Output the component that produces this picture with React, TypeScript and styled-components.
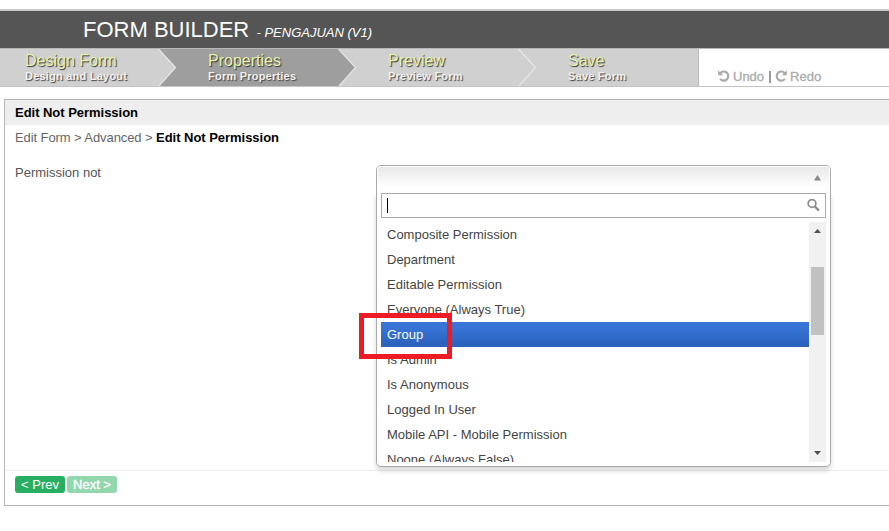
import React from "react";
import styled, { createGlobalStyle, css } from "styled-components";

const GlobalStyle = createGlobalStyle`
  * { box-sizing: border-box; }
  html, body { margin: 0; background: #fff; overflow: hidden; }
  body { font: 13px/15px "Liberation Sans", Arial, sans-serif; color: #555; }
`;

const Page = styled.div`
  height: 531px;
  padding-top: 9px;
  display: flex;
  flex-direction: column;
  overflow: hidden;
`;

const TitleBar = styled.header`
  height: 40px;
  flex: none;
  padding: 7px 0 0 83px;
  border-top: 2px solid #c6caca;
  border-bottom: 1px solid #b8b8b8;
  background: #555;
  color: #fff;
  white-space: pre;
`;

const Title = styled.span`
  font-size: 22px;
  line-height: 24px;
`;

const Subtitle = styled.em`
  font-size: 13px;
  line-height: 24px;
`;

const StepNav = styled.nav`
  height: 38px;
  flex: none;
  display: flex;
  border-bottom: 1px solid #c4c4c4;
`;

const Step = styled.div<{ $first?: boolean; $active?: boolean; $last?: boolean }>`
  position: relative;
  width: ${(p) => (p.$first ? 158 : p.$last ? 181 : 180)}px;
  padding: 3px 0 0 ${(p) => (p.$first ? 25 : 50)}px;
  background: ${(p) => (p.$active ? "#9e9e9e" : "#d0d0d0")};
  border-right: ${(p) => (p.$last ? "1px solid #bbb" : "0")};
  white-space: nowrap;
`;

const StepTitle = styled.div`
  font-size: 16px;
  line-height: 18px;
  color: #e4f2ae;
  text-shadow: 1px 1px 1px #333;
`;

const StepNote = styled.div`
  font-size: 11px;
  line-height: 13px;
  font-weight: bold;
  letter-spacing: 0.22px;
  color: #f2f2f2;
  text-shadow: 1px 1px 1px #444;
`;

const Arrow = styled.svg`
  position: absolute;
  left: 0;
  top: 0;
`;

const History = styled.div`
  display: flex;
  align-items: center;
  height: 15px;
  margin: 20px 0 0 19px;
  color: #aaa;
  -webkit-text-stroke: 0.3px #aaa;
`;

const HistoryIcon = styled.svg<{ $flip?: boolean }>`
  margin-right: 3px;
  margin-bottom: 1px;
  transform: ${(p) => (p.$flip ? "scaleX(-1)" : "none")};
`;

const Divider = styled.span`
  width: 2px;
  height: 12px;
  margin: 1px 4px 0 5px;
  background: #999;
`;

const Panel = styled.main`
  height: 407px;
  flex: none;
  margin: 12px 0 0 4px;
  border: 1px solid #b5b5b5;
  border-right: 0;
  display: flex;
  flex-direction: column;
`;

const PanelHeader = styled.h1`
  height: 25px;
  margin: 0;
  padding-left: 10px;
  background: #eee;
  color: #000;
  font-size: 13px;
  line-height: 25px;
  letter-spacing: -0.03px;
`;

const Crumbs = styled.div`
  height: 25px;
  padding-left: 10px;
  line-height: 25px;
  letter-spacing: -0.09px;
  color: #666;

  b {
    color: #000;
    letter-spacing: -0.03px;
  }
`;

const Field = styled.div`
  flex: 1;
  min-height: 0;
  display: grid;
  grid-template-columns: 361px 455px;
  padding: 15px 0 0 10px;
`;

const Label = styled.label`
  line-height: 15px;
`;

const Select = styled.div`
  position: relative;
  z-index: 1;
  height: 302px;
  border: 1px solid #aaa;
  border-radius: 5px;
  background: #fff;

  &::before {
    content: "";
    position: absolute;
    z-index: -1;
    inset: 26px -1px -1px;
    border-radius: 0 0 5px 5px;
    box-shadow: 0 4px 5px rgba(0, 0, 0, 0.15);
  }
`;

const SelectHead = styled.div`
  display: flex;
  justify-content: flex-end;
  height: 27px;
  padding: 8px 8px 0 0;
  border: 1px solid #fff;
  border-bottom: 0;
  border-radius: 4px 4px 0 0;
  background: linear-gradient(#eaeaea 5%, #eee 20%, #fff 75%);
`;

const SelectBody = styled.div`
  padding: 0 4px 4px;
  border-radius: 0 0 5px 5px;
  background: #fff;
`;

const Search = styled.div`
  height: 25px;
  display: flex;
  align-items: center;
  justify-content: space-between;
  padding: 0 4px 0 5px;
  border: 1px solid #aaa;
`;

const Caret = styled.span`
  width: 1px;
  height: 15px;
  background: #000;
`;

const ListBox = styled.div`
  display: flex;
  height: 240px;
  margin-top: 4px;
  overflow: hidden;
`;

const Options = styled.ul`
  flex: 1;
  margin: 0;
  padding: 0;
  list-style: none;
`;

const Option = styled.li<{ $selected?: boolean }>`
  height: 25px;
  padding-left: 6px;
  line-height: 25px;
  color: #444;
  ${(p) =>
    p.$selected &&
    css`
      color: #fff;
      background: linear-gradient(#3875d7 20%, #2a62bc 90%);
    `}
`;

const Scrollbar = styled.div`
  width: 17px;
  display: flex;
  flex-direction: column;
  align-items: center;
  justify-content: space-between;
  padding: 7px 0;
  background: #f1f1f1;
`;

const Thumb = styled.div`
  width: 13px;
  height: 68px;
  margin: 34px 0 auto;
  background: #c1c1c1;
`;

const Highlight = styled.div`
  position: absolute;
  left: -18px;
  top: 147px;
  width: 93px;
  height: 46px;
  border: 5px solid #ed1c24;
`;

const Footer = styled.footer`
  height: 35px;
  display: flex;
  gap: 2px;
  padding: 5px 0 0 10px;
  border-top: 1px solid #eee;
`;

const Button = styled.button<{ $disabled?: boolean }>`
  width: 50px;
  height: 17px;
  padding: 0;
  border: 0;
  border-radius: 3px;
  background: ${(p) => (p.$disabled ? "#93d7af" : "#27ae60")};
  color: #fff;
  font: 13px/17px "Liberation Sans", Arial, sans-serif;
  -webkit-text-stroke: ${(p) => (p.$disabled ? "0.3px #fff" : "0")};
`;

const options = [
  "Composite Permission",
  "Department",
  "Editable Permission",
  "Everyone (Always True)",
  "Group",
  "Is Admin",
  "Is Anonymous",
  "Logged In User",
  "Mobile API - Mobile Permission",
  "Noone (Always False)",
];

function Chevron({ fill }: { fill: string }) {
  return (
    <Arrow width="20" height="37" viewBox="0 0 20 37">
      <path d="M0 0H1L17.5 18.5L1 37H0Z" fill={fill} />
      <path d="M0.5 0L17.5 18.5L1 37" fill="none" stroke="#e6e6e6" strokeWidth="1.2" />
    </Arrow>
  );
}

function TurnIcon({ flip }: { flip?: boolean }) {
  return (
    <HistoryIcon $flip={flip} width="12" height="12" viewBox="0 0 12 12">
      <path d="M2 3.3A4.6 4.6 0 1 1 2.1 8.9" fill="none" stroke="currentColor" strokeWidth="2.1" />
      <path d="M0.1 0.3V5.3H5.1Z" fill="currentColor" />
    </HistoryIcon>
  );
}

export default function App() {
  return (
    <Page>
      <GlobalStyle />
      <TitleBar>
        <Title>FORM BUILDER</Title>
        <Subtitle>{"  - PENGAJUAN (V1)"}</Subtitle>
      </TitleBar>
      <StepNav>
        <Step $first>
          <StepTitle>Design Form</StepTitle>
          <StepNote>Design and Layout</StepNote>
        </Step>
        <Step $active>
          <Chevron fill="#d0d0d0" />
          <StepTitle>Properties</StepTitle>
          <StepNote>Form Properties</StepNote>
        </Step>
        <Step>
          <Chevron fill="#9e9e9e" />
          <StepTitle>Preview</StepTitle>
          <StepNote>Preview Form</StepNote>
        </Step>
        <Step $last>
          <Chevron fill="#d0d0d0" />
          <StepTitle>Save</StepTitle>
          <StepNote>Save Form</StepNote>
        </Step>
        <History>
          <TurnIcon />
          <span>Undo</span>
          <Divider />
          <TurnIcon flip />
          <span>Redo</span>
        </History>
      </StepNav>
      <Panel>
        <PanelHeader>Edit Not Permission</PanelHeader>
        <Crumbs>
          Edit Form &gt; Advanced &gt; <b>Edit Not Permission</b>
        </Crumbs>
        <Field>
          <Label>Permission not</Label>
          <Select>
            <SelectHead>
              <svg width="7" height="6" viewBox="0 0 7 6">
                <path d="M0 5.5L3.5 0L7 5.5Z" fill="#888" />
              </svg>
            </SelectHead>
            <SelectBody>
              <Search>
                <Caret />
                <svg width="14" height="14" viewBox="0 0 14 14" fill="none" stroke="#8a8a8a">
                  <circle cx="5" cy="4.5" r="3.9" strokeWidth="1.7" />
                  <path d="M7.9 7.5L12 11.6" strokeWidth="2.3" />
                </svg>
              </Search>
              <ListBox>
                <Options>
                  {options.map((name) => (
                    <Option key={name} $selected={name === "Group"}>
                      {name}
                    </Option>
                  ))}
                </Options>
                <Scrollbar>
                  <svg width="7" height="4" viewBox="0 0 7 4">
                    <path d="M0 4L3.5 0L7 4Z" fill="#505050" />
                  </svg>
                  <Thumb />
                  <svg width="7" height="4" viewBox="0 0 7 4">
                    <path d="M0 0L3.5 4L7 0Z" fill="#505050" />
                  </svg>
                </Scrollbar>
              </ListBox>
            </SelectBody>
            <Highlight />
          </Select>
        </Field>
        <Footer>
          <Button>&lt; Prev</Button>
          <Button $disabled>Next &gt;</Button>
        </Footer>
      </Panel>
    </Page>
  );
}
